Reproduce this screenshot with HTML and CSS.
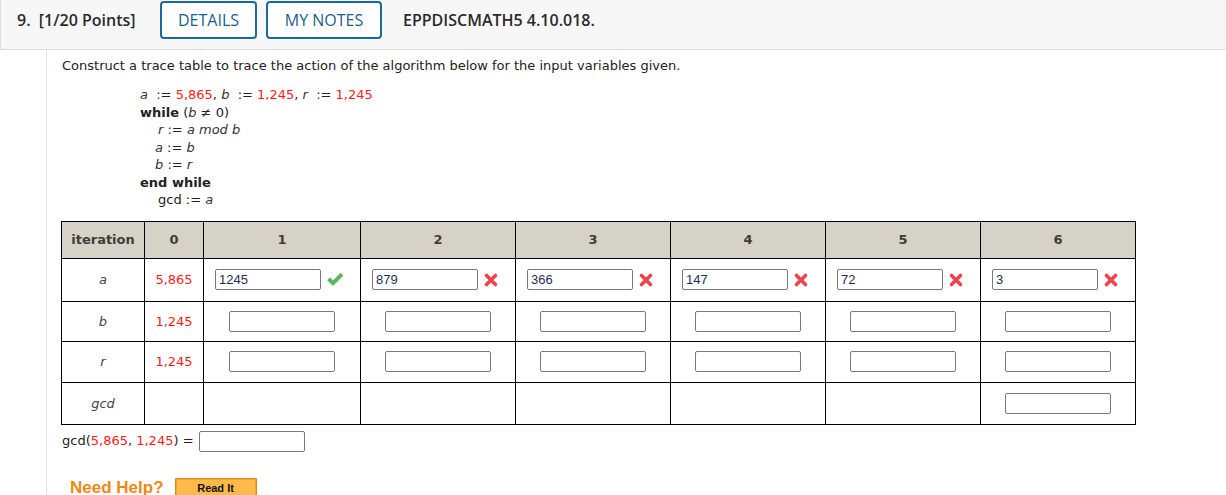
FILE: index.html
```html
<!DOCTYPE html>
<html>
<head>
<meta charset="utf-8">
<link rel="stylesheet" href="styles.css">
</head>
<body>
<div class="qhead">
  <span class="qnum">9.&nbsp; [1/20 Points]</span>
  <span class="hbtn hbtn-details">DETAILS</span>
  <span class="hbtn hbtn-notes">MY NOTES</span>
  <span class="qcode">EPPDISCMATH5 4.10.018.</span>
</div>
<div class="qbody">
  <p class="prompt">Construct a trace table to trace the action of the algorithm below for the input variables given.</p>
  <div class="algo">
    <div class="ln"><i>a</i> &nbsp;:= <span class="red">5,865</span>, <i>b</i> &nbsp;:= <span class="red">1,245</span>, <i>r</i> &nbsp;:= <span class="red">1,245</span></div>
    <div class="ln"><b>while</b> (<i>b</i> ≠ 0)</div>
    <div class="ln in1"><i>r</i> := <i>a mod b</i></div>
    <div class="ln in2"><i>a</i> := <i>b</i></div>
    <div class="ln in2"><i>b</i> := <i>r</i></div>
    <div class="ln"><b>end while</b></div>
    <div class="ln in1">gcd := <i>a</i></div>
  </div>
  <table class="trace">
    <colgroup>
      <col class="c-it"><col class="c-0"><col class="c-1"><col class="c-n"><col class="c-n"><col class="c-n"><col class="c-n"><col class="c-n">
    </colgroup>
    <tr class="r-head">
      <th>iteration</th><th>0</th><th>1</th><th>2</th><th>3</th><th>4</th><th>5</th><th>6</th>
    </tr>
    <tr class="r-a">
      <td class="var"><i>a</i></td><td class="red">5,865</td>
      <td><span class="grp"><span class="box">1245</span><svg class="mark" width="18" height="15" viewBox="0 0 18 15"><path d="M1.5 8.2 L4 5.8 L7 8.8 L14.5 1.2 L17 3.6 L7 13.6 Z" fill="#5cb85c" stroke="#4a9e4a" stroke-width="0.6" stroke-linejoin="round"/></svg></span></td>
      <td><span class="grp"><span class="box">879</span><svg class="mark" width="16" height="16" viewBox="0 0 16 16"><path d="M3.5 3.5 L12.5 12.5 M12.5 3.5 L3.5 12.5" stroke="#f0434c" stroke-width="3.6" stroke-linecap="round"/></svg></span></td>
      <td><span class="grp"><span class="box">366</span><svg class="mark" width="16" height="16" viewBox="0 0 16 16"><path d="M3.5 3.5 L12.5 12.5 M12.5 3.5 L3.5 12.5" stroke="#f0434c" stroke-width="3.6" stroke-linecap="round"/></svg></span></td>
      <td><span class="grp"><span class="box">147</span><svg class="mark" width="16" height="16" viewBox="0 0 16 16"><path d="M3.5 3.5 L12.5 12.5 M12.5 3.5 L3.5 12.5" stroke="#f0434c" stroke-width="3.6" stroke-linecap="round"/></svg></span></td>
      <td><span class="grp"><span class="box">72</span><svg class="mark" width="16" height="16" viewBox="0 0 16 16"><path d="M3.5 3.5 L12.5 12.5 M12.5 3.5 L3.5 12.5" stroke="#f0434c" stroke-width="3.6" stroke-linecap="round"/></svg></span></td>
      <td><span class="grp"><span class="box">3</span><svg class="mark" width="16" height="16" viewBox="0 0 16 16"><path d="M3.5 3.5 L12.5 12.5 M12.5 3.5 L3.5 12.5" stroke="#f0434c" stroke-width="3.6" stroke-linecap="round"/></svg></span></td>
    </tr>
    <tr class="r-b">
      <td class="var"><i>b</i></td><td class="red">1,245</td>
      <td><span class="box"></span></td><td><span class="box"></span></td><td><span class="box"></span></td><td><span class="box"></span></td><td><span class="box"></span></td><td><span class="box"></span></td>
    </tr>
    <tr class="r-r">
      <td class="var"><i>r</i></td><td class="red">1,245</td>
      <td><span class="box"></span></td><td><span class="box"></span></td><td><span class="box"></span></td><td><span class="box"></span></td><td><span class="box"></span></td><td><span class="box"></span></td>
    </tr>
    <tr class="r-gcd">
      <td class="var"><i>gcd</i></td><td></td><td></td><td></td><td></td><td></td><td></td>
      <td><span class="box"></span></td>
    </tr>
  </table>
  <div class="gcdline">gcd(<span class="red">5,865</span>, <span class="red">1,245</span>) = <span class="box"></span></div>
  <div class="help">
    <span class="needhelp">Need Help?</span>
    <span class="readit">Read It</span>
  </div>
</div>
</body>
</html>
```
FILE: styles.css
```css
html, body {
  margin: 0;
  padding: 0;
  background: #fff;
}
body {
  font-family: "DejaVu Sans", Verdana, sans-serif;
  color: #222;
  overflow: hidden;
}
.qhead {
  display: flex;
  align-items: flex-start;
  height: 48px;
  background: #f7f7f7;
  border-left: 1px solid #dddddd;
  border-bottom: 1px solid #dcdcdc;
  font-family: "Open Sans", "Noto Sans", sans-serif;
  font-size: 16px;
  padding-top: 1px;
}
.qnum {
  font-weight: 600;
  color: #2b2b2b;
  margin-left: 16px;
  margin-top: 8px;
  width: 143px;
  white-space: nowrap;
}
.hbtn {
  box-sizing: border-box;
  height: 38px;
  border: 2px solid #1a6a9a;
  border-radius: 4px;
  color: #1a5f8e;
  display: flex;
  align-items: center;
  justify-content: center;
  background: #fff;
}
.hbtn-details { width: 97px; }
.hbtn-notes { width: 116px; margin-left: 9px; }
.qcode {
  font-weight: 600;
  color: #2b2b2b;
  margin-left: 21px;
  margin-top: 8px;
}
.qbody {
  margin-left: 46px;
  border-left: 1px solid #e2e2e2;
  padding: 7px 0 0 15px;
  font-size: 13px;
}
.prompt {
  margin: 0;
  line-height: 18px;
  color: #222;
}
.algo {
  margin: 11px 0 0 78px;
  font-size: 13px;
}
.algo .ln {
  line-height: 17.5px;
}
.algo i { color: #333; }
.algo .in1 { padding-left: 18px; }
.algo .in2 { padding-left: 15px; }
.red { color: #ff1a1a; }
.trace {
  margin: 12px 0 0 -1px;
  border-collapse: collapse;
  table-layout: fixed;
  width: 1075px;
}
.c-it { width: 83px; }
.c-0 { width: 59px; }
.c-1 { width: 157px; }
.c-n { width: 155px; }
.trace th, .trace td {
  border: 1px solid #000;
  text-align: center;
  padding: 0;
}
.trace th {
  background: #d6d2c7;
  color: #3d3d3d;
  font-weight: bold;
  font-size: 13px;
  height: 36px;
}
.r-a td { height: 42px; }
.r-b td { height: 39px; }
.r-r td { height: 40px; }
.r-gcd td { height: 41px; }
.trace td.var { color: #444; }
.grp {
  display: inline-flex;
  align-items: center;
  gap: 5px;
  margin-left: -5px;
}
.box {
  box-sizing: border-box;
  display: inline-block;
  width: 106px;
  height: 21px;
  border: 1px solid #7a7a7a;
  border-radius: 2px;
  vertical-align: middle;
  text-align: left;
  font-family: "Liberation Sans", Arial, sans-serif;
  font-size: 13px;
  line-height: 19px;
  padding-left: 3px;
  color: #1f2f4f;
  background: #fff;
}
.mark { display: block; }
.gcdline {
  margin-top: 5px;
  height: 21px;
  line-height: 21px;
  color: #222;
}
.gcdline .box { margin-left: 1px; }
.help {
  display: flex;
  align-items: flex-end;
  margin: 27px 0 0 8px;
}
.needhelp {
  font-family: "Liberation Sans", Arial, sans-serif;
  font-weight: bold;
  font-size: 17px;
  color: #ee8a13;
  line-height: 20px;
}
.readit {
  box-sizing: border-box;
  margin-left: 11px;
  width: 82px;
  height: 20px;
  background: #fdb94a;
  border: 1px solid #d98a12;
  box-shadow: inset 0 0 0 1px #f6a430;
  font-family: "Liberation Sans", Arial, sans-serif;
  font-weight: bold;
  font-size: 11px;
  color: #111;
  text-align: center;
  line-height: 18px;
  border-radius: 1px;
}
```
